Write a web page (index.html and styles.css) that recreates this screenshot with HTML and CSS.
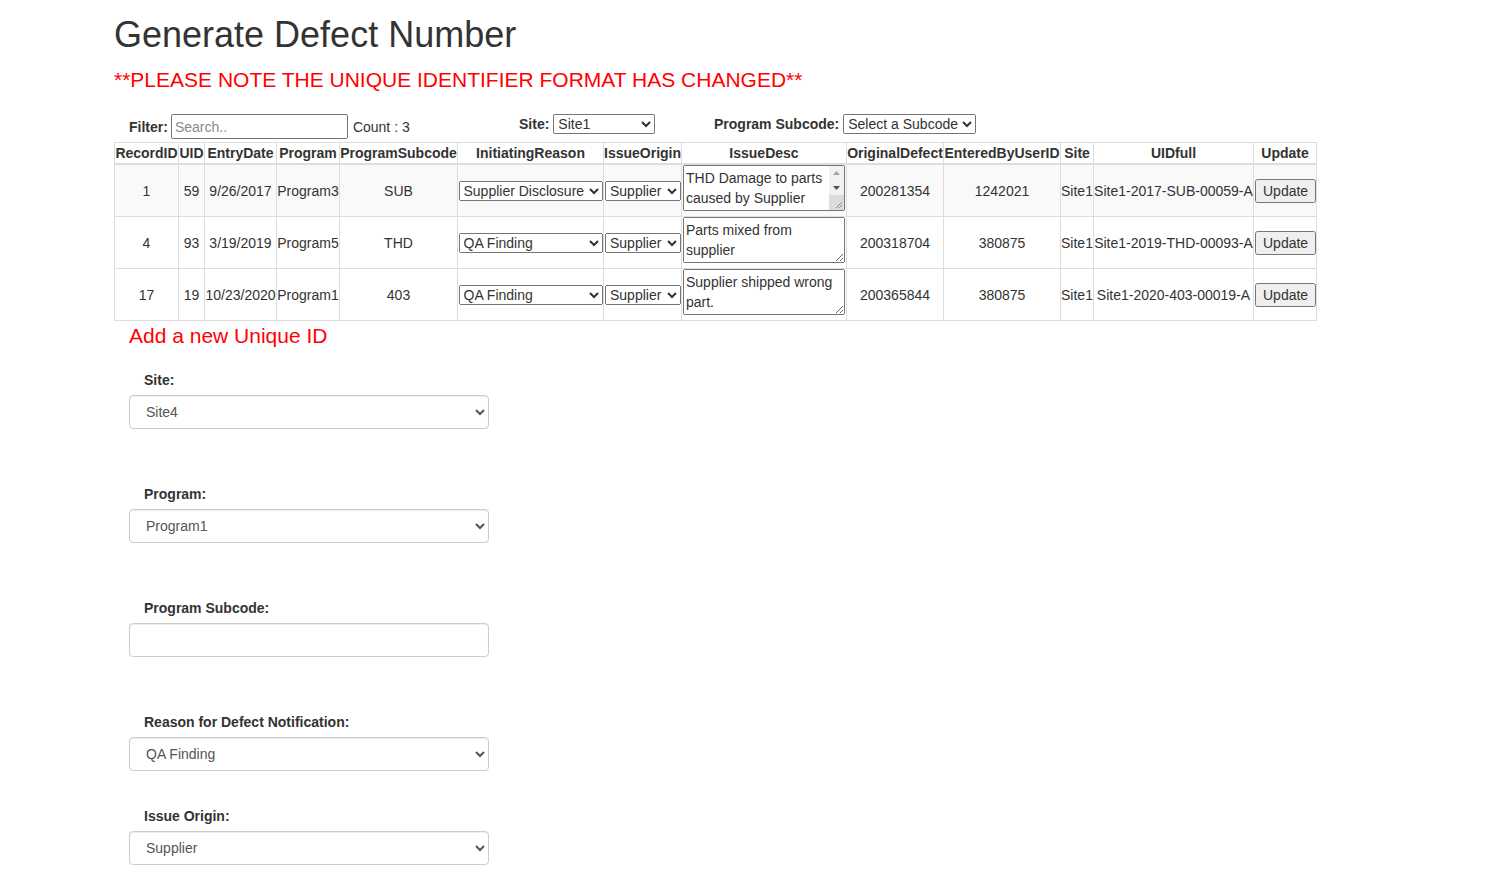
FILE: index.html
```html
<!DOCTYPE html>
<html>
<head>
<meta charset="utf-8">
<title>Generate Defect Number</title>
<link rel="stylesheet" href="styles.css">
</head>
<body>
<div class="page">
  <h1 class="title">Generate Defect Number</h1>
  <div class="note">**PLEASE NOTE THE UNIQUE IDENTIFIER FORMAT HAS CHANGED**</div>

  <div class="filters">
    <div class="fgroup fgroup-search">
      <label class="flabel">Filter:</label>
      <input class="search" type="text" placeholder="Search..">
      <span class="count">Count : 3</span>
    </div>
    <div class="fgroup fgroup-site">
      <label class="flabel">Site:</label>
      <select class="site-select"><option>Site1</option></select>
    </div>
    <div class="fgroup fgroup-sub">
      <label class="flabel spaced">Program Subcode:</label>
      <select class="sub-select"><option>Select a Subcode</option></select>
    </div>
  </div>

  <table class="grid">
    <colgroup>
      <col class="c-rec"><col class="c-uid"><col class="c-date"><col class="c-prog"><col class="c-sub">
      <col class="c-reason"><col class="c-origin"><col class="c-desc"><col class="c-orig">
      <col class="c-user"><col class="c-site"><col class="c-full"><col class="c-upd">
    </colgroup>
    <thead>
      <tr>
        <th>RecordID</th><th>UID</th><th>EntryDate</th><th>Program</th><th>ProgramSubcode</th>
        <th>InitiatingReason</th><th>IssueOrigin</th><th>IssueDesc</th><th>OriginalDefect</th>
        <th>EnteredByUserID</th><th>Site</th><th>UIDfull</th><th>Update</th>
      </tr>
    </thead>
    <tbody>
      <tr class="odd">
        <td>1</td><td>59</td><td>9/26/2017</td><td>Program3</td><td>SUB</td>
        <td><select class="reason"><option>Supplier Disclosure</option><option>QA Finding</option></select></td>
        <td><select class="origin"><option>Supplier</option></select></td>
        <td>
          <div class="desc-wrap">
            <textarea class="desc desc-scroll" rows="2">THD Damage to parts caused by Supplier</textarea>
            <div class="sb">
              <svg class="sb-up" width="15" height="14" viewBox="0 0 15 14"><path d="M4 9 L7.5 5 L11 9 Z" fill="#a3a3a3"/></svg>
              <svg class="sb-down" width="15" height="15" viewBox="0 0 15 15"><path d="M4 6 L11 6 L7.5 10 Z" fill="#505050"/></svg>
            </div>
            <div class="sb-corner">
              <svg width="15" height="15" viewBox="0 0 15 15"><path d="M13 7 L7 13 M13 10 L10 13" stroke="#8a8a8a" stroke-width="1"/></svg>
            </div>
          </div>
        </td>
        <td>200281354</td><td>1242021</td><td>Site1</td><td>Site1-2017-SUB-00059-A</td>
        <td><button class="upd">Update</button></td>
      </tr>
      <tr>
        <td>4</td><td>93</td><td>3/19/2019</td><td>Program5</td><td>THD</td>
        <td><select class="reason"><option>QA Finding</option><option>Supplier Disclosure</option></select></td>
        <td><select class="origin"><option>Supplier</option></select></td>
        <td><div class="desc-wrap"><textarea class="desc" rows="2">Parts mixed from supplier</textarea></div></td>
        <td>200318704</td><td>380875</td><td>Site1</td><td>Site1-2019-THD-00093-A</td>
        <td><button class="upd">Update</button></td>
      </tr>
      <tr>
        <td>17</td><td>19</td><td>10/23/2020</td><td>Program1</td><td>403</td>
        <td><select class="reason"><option>QA Finding</option><option>Supplier Disclosure</option></select></td>
        <td><select class="origin"><option>Supplier</option></select></td>
        <td><div class="desc-wrap"><textarea class="desc" rows="2">Supplier shipped wrong part.</textarea></div></td>
        <td>200365844</td><td>380875</td><td>Site1</td><td>Site1-2020-403-00019-A</td>
        <td><button class="upd">Update</button></td>
      </tr>
    </tbody>
  </table>

  <h3 class="add-title">Add a new Unique ID</h3>

  <form class="add-form">
    <div class="form-group">
      <label class="form-label">Site:</label>
      <select class="form-control"><option>Site4</option></select>
    </div>
    <div class="form-group">
      <label class="form-label">Program:</label>
      <select class="form-control"><option>Program1</option></select>
    </div>
    <div class="form-group">
      <label class="form-label">Program Subcode:</label>
      <input class="form-control" type="text">
    </div>
    <div class="form-group short">
      <label class="form-label">Reason for Defect Notification:</label>
      <select class="form-control"><option>QA Finding</option></select>
    </div>
    <div class="form-group last">
      <label class="form-label">Issue Origin:</label>
      <select class="form-control"><option>Supplier</option></select>
    </div>
  </form>
</div>
</body>
</html>
```

FILE: styles.css
```css
html, body {
  margin: 0;
  padding: 0;
  background: #fff;
}

body {
  font-family: "Liberation Sans", Arial, Helvetica, sans-serif;
  font-size: 14px;
  line-height: 20px;
  color: #333;
}

input, select, textarea, button {
  font-family: inherit;
  font-size: inherit;
  color: inherit;
}

.page {
  padding: 15px 0 0 114px;
}

.title {
  margin: 0;
  font-size: 36px;
  line-height: 40px;
  font-weight: 500;
  color: #333;
}

.note {
  margin-top: 13px;
  font-size: 21px;
  line-height: 24px;
  color: #ff0000;
}

/* filter row */
.filters {
  display: flex;
  align-items: flex-start;
  margin-top: 22px;
  padding-left: 15px;
}

.fgroup {
  display: flex;
  align-items: center;
}

.fgroup-search {
  width: 390px;
}

.fgroup-site {
  width: 195px;
}

.flabel {
  font-weight: bold;
}

.search {
  box-sizing: border-box;
  width: 177px;
  height: 25px;
  margin: 0 0 0 3px;
  padding: 1px 3px;
  border: 1px solid #767676;
  border-radius: 2px;
  line-height: 20px;
}

.search::placeholder {
  color: #8a8a8a;
}

.count {
  margin-left: 5px;
}

.site-select {
  width: 102px;
  height: 20px;
  margin: 0 0 0 4px;
}

.sub-select {
  width: 133px;
  height: 20px;
  margin: 0 0 0 4px;
}

/* grid */
.grid {
  width: 1203px;
  margin-top: 3px;
  table-layout: fixed;
  border-collapse: collapse;
  border: 1px solid #ddd;
}

.c-rec { width: 64px; }
.c-uid { width: 26px; }
.c-date { width: 72px; }
.c-prog { width: 63px; }
.c-sub { width: 118px; }
.c-reason { width: 146px; }
.c-origin { width: 78px; }
.c-desc { width: 165px; }
.c-orig { width: 97px; }
.c-user { width: 117px; }
.c-site { width: 33px; }
.c-full { width: 160px; }
.c-upd { width: 63px; }

.grid th,
.grid td {
  border: 1px solid #ddd;
  padding: 0;
  text-align: center;
  vertical-align: middle;
  white-space: nowrap;
  line-height: 20px;
  overflow: visible;
}

.grid th {
  font-weight: bold;
  border-bottom-width: 2px;
}

.grid tr.odd td {
  background: #f9f9f9;
}

.reason {
  width: 144px;
  height: 20px;
  margin: 0;
}

.origin {
  width: 76px;
  height: 20px;
  margin: 0 0 0 1px;
}

.desc-wrap {
  position: relative;
  width: 162px;
  height: 46px;
  margin: 0 0 5px 1px;
}

.desc {
  display: block;
  box-sizing: border-box;
  width: 162px;
  height: 46px;
  margin: 0;
  padding: 2px;
  line-height: 20px;
  white-space: pre-wrap;
  text-align: left;
  overflow: hidden;
}

.desc-scroll {
  padding-right: 17px;
}

.sb {
  position: absolute;
  top: 1px;
  right: 1px;
  width: 15px;
  height: 29px;
  background: #f1f1f1;
  display: flex;
  flex-direction: column;
}

.sb svg {
  display: block;
}

.sb-corner {
  position: absolute;
  right: 1px;
  bottom: 1px;
  width: 15px;
  height: 15px;
  background: #dcdcdc;
}

.sb-corner svg {
  display: block;
}

.upd {
  height: 24px;
  padding: 0 6px;
  margin: 0 0 0 1px;
  line-height: 18px;
}

/* add form */
.add-title {
  margin: 3px 0 0 15px;
  font-size: 21px;
  line-height: 24px;
  font-weight: 500;
  color: #ff0000;
}

.add-form {
  margin-top: 22px;
  padding-left: 15px;
}

.form-group {
  margin-bottom: 55px;
}

.form-group.short {
  margin-bottom: 35px;
}

.form-group.last {
  margin-bottom: 0;
}

.form-label {
  display: block;
  padding-left: 15px;
  margin-bottom: 5px;
  font-weight: bold;
  line-height: 20px;
}

.form-control {
  display: block;
  box-sizing: border-box;
  width: 360px;
  height: 34px;
  margin: 0;
  padding: 6px 12px;
  font-size: 14px;
  line-height: 20px;
  color: #555;
  background: #fff;
  border: 1px solid #ccc;
  border-radius: 4px;
  box-shadow: inset 0 1px 1px rgba(0, 0, 0, 0.075);
}
```
